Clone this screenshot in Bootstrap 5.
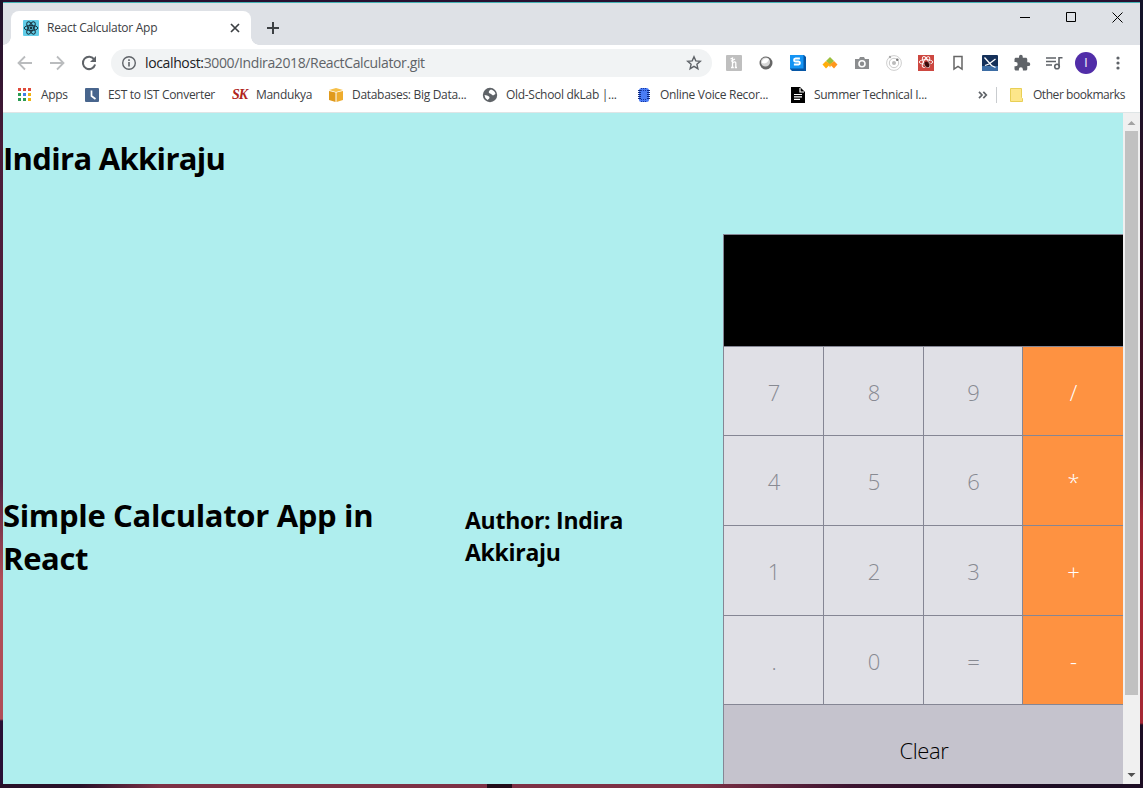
<!DOCTYPE html>
<html lang="en">
<head>
<meta charset="utf-8">
<meta name="viewport" content="width=device-width, initial-scale=1">
<title>React Calculator App</title>
<link href="https://cdn.jsdelivr.net/npm/bootstrap@5.3.0/dist/css/bootstrap.min.css" rel="stylesheet">
<style>
html,body{height:100%}
body{font-family:"Open Sans","Noto Sans",sans-serif;font-size:12px;color:#3c4043;overflow:hidden;padding:2px 3px 4px;
 background:linear-gradient(90deg,#281028 0 80px,#7d3045 160px 487px,#220b18 487px 512px,#7d3045 512px 700px,#3d1430 850px,#1d0d24 1050px) bottom/100% 4px no-repeat,
 linear-gradient(#1b1029,#4b1b38 150px,#542342 480px,#b04e58 580px 719px,#281035 721px) left/3px 100% no-repeat,
 linear-gradient(#131329,#181329 90px,#351023 200px,#4a1426 440px,#a52734 520px 723px,#1d0d24 725px) right/3px 100% no-repeat,#281030}
svg{display:block;flex:none}
.win{height:782px;background:#fff}
.tabstrip{height:43px;background:#dee1e6;border-top:1px solid #45b3b5;padding-left:8px}
.tab{width:240px;height:34px;margin-top:8px;background:#fff;border-radius:8px 8px 0 0;padding:0 10px 0 12px;position:relative}
.tab::before,.tab::after{content:"";position:absolute;bottom:0;width:8px;height:8px}
.tab::before{left:-8px;background:radial-gradient(circle at 0 0,transparent 7.5px,#fff 8px)}
.tab::after{right:-8px;background:radial-gradient(circle at 100% 0,transparent 7.5px,#fff 8px)}
.t-tab{letter-spacing:-.28px}
.plus{margin:18px 0 0 15px}
.winbtns{height:28px}
.winbtns>span{width:46px;display:grid;place-items:center}
.toolbar{height:36px;padding-left:6px}
.cell{width:32px;height:36px;display:grid;place-items:center;flex:none}
.omni{width:601px;height:28px;background:#f1f3f4;border-radius:14px;padding:0 10px;margin-left:6px;margin-right:6px}
.url{font-size:14px;color:#5f6368;letter-spacing:-.37px;line-height:20px}
.url b{font-weight:400;color:#202124}
.marks{height:32px;padding-left:14px;padding-right:15px;padding-bottom:3px;white-space:nowrap;border-bottom:1px solid #dfe5e6}
.mk{display:flex;align-items:center;gap:8px;flex:none;letter-spacing:-.3px}
.mk svg{width:16px;height:16px}
.mk.tight{letter-spacing:-.43px}
.w67{width:67px}.w148{width:148px}.w96{width:96px}.w154{width:154px}
.sep{width:1px;height:16px;background:#c9cccf}
.sk{font:italic bold 14px "Liberation Serif",serif;color:#b0241c;width:16px;letter-spacing:-1px}
.avatar{width:22px;height:22px;border-radius:50%;background:#512da8;color:#fff;display:grid;place-items:center}
.view{height:671px}
.pg{background:#afeeee;color:#000;overflow:hidden}
.pg h1,.pg h2,.pg h3{font-weight:700;margin:0}
.pg h1,.pg h2{font-size:31px;line-height:43px}
.pg h1{padding-top:24px;height:121px;letter-spacing:-.68px}
.pg h2{width:462px;letter-spacing:-.33px;padding-bottom:2px}
.pg h3{width:258px;font-size:23px;line-height:32px;letter-spacing:-.28px;padding-bottom:3px}
.main{height:607px}
.calc{width:400px;height:607px;display:grid;grid-template-columns:100px 100px 99px 101px;grid-template-rows:112px 89px 90px 90px 89px 137px;flex:none;font-size:22px;font-weight:300;color:#888a92}
.calc>*{border-left:1px solid #858694;border-top:1px solid #858694;background:#e0e0e6;display:grid;place-items:center;padding-top:2px;padding-left:1px}
.calc .op{background:#fe9241;color:#fff}
.calc .scr{background:#000;grid-column:1/-1}
.calc .clr{background:#c5c3cd;color:#000;grid-column:1/-1;place-items:start center;padding-top:29px;letter-spacing:-.4px}
.sb{width:17px;background:#f0f0f0;flex:none}
.thumb{width:13px;height:564px;background:#c1c1c1}
</style>
</head>
<body>
<div class="win d-flex flex-column">
 <header class="tabstrip d-flex">
  <div class="tab d-flex align-items-center">
   <svg width="16" height="16" viewBox="0 0 16 16"><rect width="16" height="16" rx="1" fill="#61cde8"/><g fill="none" stroke="#17333f" stroke-width="1"><ellipse cx="8" cy="8" rx="6.8" ry="2.6"/><ellipse cx="8" cy="8" rx="6.8" ry="2.6" transform="rotate(60 8 8)"/><ellipse cx="8" cy="8" rx="6.8" ry="2.6" transform="rotate(120 8 8)"/></g><circle cx="8" cy="8" r="1.4" fill="#17333f"/></svg>
   <span class="t-tab ms-2">React Calculator App</span>
   <svg class="ms-auto" width="12" height="12" viewBox="0 0 12 12"><path d="M2 2l8 8M10 2l-8 8" stroke="#3c4043" stroke-width="1.7"/></svg>
  </div>
  <svg class="plus" width="14" height="14" viewBox="0 0 14 14"><path d="M7 1v12M1 7h12" stroke="#3c4043" stroke-width="2"/></svg>
  <div class="winbtns d-flex ms-auto">
   <span><svg width="11" height="11"><path d="M0 5.5h10" stroke="#000"/></svg></span>
   <span><svg width="11" height="11"><path d="M.5.5h9v9h-9z" fill="none" stroke="#000"/></svg></span>
   <span><svg width="11" height="11"><path d="M.5.5l10 10M10.500.5l-10 10" stroke="#000"/></svg></span>
  </div>
 </header>
 <nav class="toolbar d-flex align-items-center">
  <span class="cell"><svg width="16" height="16" viewBox="0 0 16 16"><path d="M15 8H2M8 1.500L1.500 8 8 14.500" fill="none" stroke="#babcbe" stroke-width="1.8"/></svg></span>
  <span class="cell"><svg width="16" height="16" viewBox="0 0 16 16"><path d="M1 8h13M8 1.500L14.500 8 8 14.500" fill="none" stroke="#babcbe" stroke-width="1.8"/></svg></span>
  <span class="cell"><svg width="16" height="16" viewBox="0 0 16 16"><path d="M13.300 4.500A6.200 6.200 0 1 0 14.100 9.500" fill="none" stroke="#5f6368" stroke-width="2"/><path d="M15 1v6H9z" fill="#5f6368"/></svg></span>
  <div class="omni d-flex align-items-center">
   <svg width="16" height="16" viewBox="0 0 16 16"><circle cx="8" cy="8" r="6.300" fill="none" stroke="#5f6368" stroke-width="1.400"/><path d="M8 7v4.500M8 4.300v1.600" stroke="#5f6368" stroke-width="1.600"/></svg>
   <span class="url ms-2"><b>localhost:</b>3000/Indira2018/ReactCalculator.git</span>
   <svg class="ms-auto" width="16" height="16" viewBox="0 0 16 16"><path d="M8 1.800l1.800 4.100 4.500.4-3.400 3 1 4.400L8 11.400l-3.900 2.300 1-4.400-3.400-3 4.500-.4z" fill="none" stroke="#5f6368" stroke-width="1.400"/></svg>
  </div>
  <span class="cell"><svg width="16" height="16" viewBox="0 0 16 16"><rect width="16" height="16" rx="1" fill="#bfbfbf"/><path d="M4.500 4L6.500 3v9.500M6.500 8.500C8 6 10 6.500 9.800 8.500v4M5 12.500h2.800M8.800 12.500H11M5 6.200L9 4" fill="none" stroke="#fff" stroke-width="1.300"/></svg></span>
  <span class="cell"><svg width="16" height="16" viewBox="0 0 16 16"><circle cx="8" cy="8" r="6.500" fill="#666"/><circle cx="7.500" cy="7" r="4.600" fill="#d5d5d5"/><path d="M4 8a4.500 4 0 0 1 7-4 5 5 0 0 1-7 4" fill="#fff"/></svg></span>
  <span class="cell"><svg width="16" height="16" viewBox="0 0 16 16"><path d="M0 0h14l2 2v14H2l-2-2z" fill="#0757a6"/><path d="M0 0h13.500v13.500H0z" fill="#1494f4"/><path d="M9.900 3.500H5.500q-1.400 0-1.400 1.500t1.400 1.500h3q1.400 0 1.400 1.500T8.500 9.600H3.900" fill="none" stroke="#fff" stroke-width="2"/></svg></span>
  <span class="cell"><svg width="16" height="16" viewBox="0 0 16 16"><path d="M4 6L.500 9.500 4 13.500l4-4z" fill="#ffad0a"/><path d="M12 6l3.500 3.500-3.500 4-4-4z" fill="#ff961c"/><path d="M5 6.500h6L8 12.500z" fill="#fda61c"/><path d="M8 2l4 4-4 3-4-3z" fill="#9bbf3a"/></svg></span>
  <span class="cell"><svg width="16" height="16" viewBox="0 0 16 16"><path d="M1 4h4l1-2h4l1 2h4v10H1z" fill="#8b8d8f"/><circle cx="8" cy="8.800" r="3" fill="none" stroke="#fff" stroke-width="1.600"/></svg></span>
  <span class="cell"><svg width="16" height="16" viewBox="0 0 16 16"><circle cx="8" cy="8" r="7.400" fill="none" stroke="#c2c2c2" stroke-width=".8"/><circle cx="8" cy="8" r="4.700" fill="none" stroke="#bbb" stroke-width=".8"/><circle cx="8" cy="8" r="2" fill="#bbb"/><circle cx="11.300" cy="4.700" r="1.300" fill="#777"/><circle cx="4" cy="2" r="1.200" fill="#aaa"/></svg></span>
  <span class="cell"><svg width="16" height="16" viewBox="0 0 16 16"><rect width="16" height="16" fill="#cd4740"/><g fill="none" stroke="#fff" stroke-width=".9"><ellipse cx="8" cy="7" rx="6.800" ry="2.400"/><ellipse cx="8" cy="7" rx="6" ry="2.400" transform="rotate(60 8 7)"/><ellipse cx="8" cy="7" rx="6" ry="2.400" transform="rotate(120 8 7)"/></g><ellipse cx="9" cy="9.500" rx="2" ry="3.200" transform="rotate(-30 9 9.500)" fill="#3a0909"/><path d="M5.500 9l7 0M11.500 6l-5 6" stroke="#3a0909" stroke-width=".8"/></svg></span>
  <span class="cell"><svg width="16" height="16" viewBox="0 0 16 16"><path d="M4 1.500h8v12.700L8 11.500l-4 2.700z" fill="none" stroke="#666" stroke-width="1.500"/></svg></span>
  <span class="cell"><svg width="16" height="16" viewBox="0 0 16 16"><rect width="16" height="16" rx="1" fill="#143059"/><path d="M0 11h16v4q0 1-1 1H1q-1 0-1-1z" fill="#3c6da5"/><path d="M2.500 2.500l4 4.500 3 3.500 4 2M3 10.500l4-1.500 6.500-5" fill="none" stroke="#fff" stroke-width="1.300"/></svg></span>
  <span class="cell"><svg width="18" height="18" viewBox="0 0 24 24"><path d="M20.500 11H19V7c0-1.100-.9-2-2-2h-4V3.500a2.500 2.500 0 0 0-5 0V5H4c-1.100 0-2 .9-2 2v3.800h1.500a2.700 2.700 0 0 1 0 5.400H2V20c0 1.100.9 2 2 2h3.800v-1.500a2.700 2.700 0 0 1 5.400 0V22H17c1.100 0 2-.9 2-2v-4h1.500a2.500 2.500 0 0 0 0-5z" fill="#5f6368"/></svg></span>
  <span class="cell"><svg width="18" height="16" viewBox="0 0 18 16"><path d="M1 3h10M1 6.500h10M1 10h6M14 11.500V2.800h3.500" fill="none" stroke="#5f6368" stroke-width="1.600"/><circle cx="12" cy="11.500" r="2.300" fill="none" stroke="#5f6368" stroke-width="1.600"/></svg></span>
  <span class="cell"><span class="avatar">I</span></span>
  <span class="cell"><svg width="4" height="16" viewBox="0 0 4 16" fill="#5f6368"><circle cx="2" cy="3" r="1.600"/><circle cx="2" cy="8" r="1.600"/><circle cx="2" cy="13" r="1.600"/></svg></span>
 </nav>
 <div class="marks d-flex align-items-center">
  <span class="mk w67"><svg viewBox="0 0 16 16"><path d="M1 1h3v3H1zM6 1h3v3H6zM11 1h3v3h-3z" fill="#e04a3a"/><path d="M1 6h3v3H1zM1 11h3v3H1zM6 11h3v3H6z" fill="#2b9c53"/><path d="M6 6h3v3H6z" fill="#3e7ee8"/><path d="M11 6h3v3h-3zM11 11h3v3h-3z" fill="#efb211"/></svg>Apps</span>
  <span class="mk w148"><svg viewBox="0 0 16 16"><rect x="1" y="1" width="14" height="14" rx="1" fill="#48658d"/><path d="M7.500 3.500V9l4 3" fill="none" stroke="#fff" stroke-width="1.700"/></svg><span>EST to IST Converter</span></span>
  <span class="mk w96"><span class="sk">SK</span><span>Mandukya</span></span>
  <span class="mk w154"><svg viewBox="0 0 16 16"><path d="M1 3l7-2 7 2-7 2z" fill="#f6c04a"/><path d="M1 4l6.500 1.500V15L1 13z" fill="#e09a1c"/><path d="M15 4L8.500 5.500V15l6.500-2z" fill="#eeac2e"/></svg><span>Databases: Big Data...</span></span>
  <span class="mk w154"><svg viewBox="0 0 16 16"><circle cx="8" cy="8" r="7.200" fill="#5f6368"/><path d="M2.500 8q3 0 4.500 1.500T5.500 13Q2.500 11 2.500 8M7 6q-1-2 2-3.500 4 1 4.500 4.500L11 8.500 9 7z" fill="#fff"/></svg><span>Old-School dkLab |...</span></span>
  <span class="mk w154"><svg viewBox="0 0 16 16"><rect x="3" y="1" width="10" height="14" rx="2.500" fill="#4a7cf5"/><path d="M3.500 3v10M12.500 3v10" stroke="#102a80" stroke-width="3" stroke-dasharray="1 1"/><path d="M5 1.500h6M5 3.500h6M5 12.500h6M5 14.500h6" stroke="#1838a0" stroke-dasharray="1 1"/></svg><span>Online Voice Recor...</span></span>
  <span class="mk w154"><svg viewBox="0 0 16 16"><path d="M1 0h9l5 5v11H1z" fill="#000"/><path d="M10 1v4h4M4 7.500h8M4 9.900h8M4 12.300h6" fill="none" stroke="#fff" stroke-width="1.200"/></svg><span>Summer Technical I...</span></span>
  <svg class="ms-auto" width="10" height="8" viewBox="0 0 10 8"><path d="M1 .8L4 4 1 7.200M5.300.8l3 3.200-3 3.200" fill="none" stroke="#5f6368" stroke-width="1.700"/></svg>
  <span class="sep ms-2 me-2"></span>
  <span class="mk tight ms-1"><svg viewBox="0 0 16 16"><path d="M1.500 1.500h11v9l1 1v3h-12z" fill="#fde68a" stroke="#e8cf55"/></svg><span>Other bookmarks</span></span>
 </div>
 <div class="view d-flex">
  <main class="pg flex-grow-1">
   <h1>Indira Akkiraju</h1>
   <div class="main d-flex align-items-center">
    <h2>Simple Calculator App in<br>React</h2>
    <h3>Author: Indira<br>Akkiraju</h3>
    <div class="calc">
     <div class="scr"></div>
     <div>7</div><div>8</div><div>9</div><div class="op">/</div>
     <div>4</div><div>5</div><div>6</div><div class="op">*</div>
     <div>1</div><div>2</div><div>3</div><div class="op">+</div>
     <div>.</div><div>0</div><div>=</div><div class="op">-</div>
     <div class="clr">Clear</div>
    </div>
   </div>
  </main>
  <div class="sb d-flex flex-column align-items-center">
   <svg width="17" height="18"><path d="M4.500 12h8l-4-4z" fill="#a3a3a3"/></svg>
   <div class="thumb"></div>
   <svg class="mt-auto" width="17" height="17"><path d="M4.500 6h8l-4 4z" fill="#505050"/></svg>
  </div>
 </div>
</div>
<script src="https://cdn.jsdelivr.net/npm/bootstrap@5.3.0/dist/js/bootstrap.bundle.min.js"></script>
</body>
</html>
